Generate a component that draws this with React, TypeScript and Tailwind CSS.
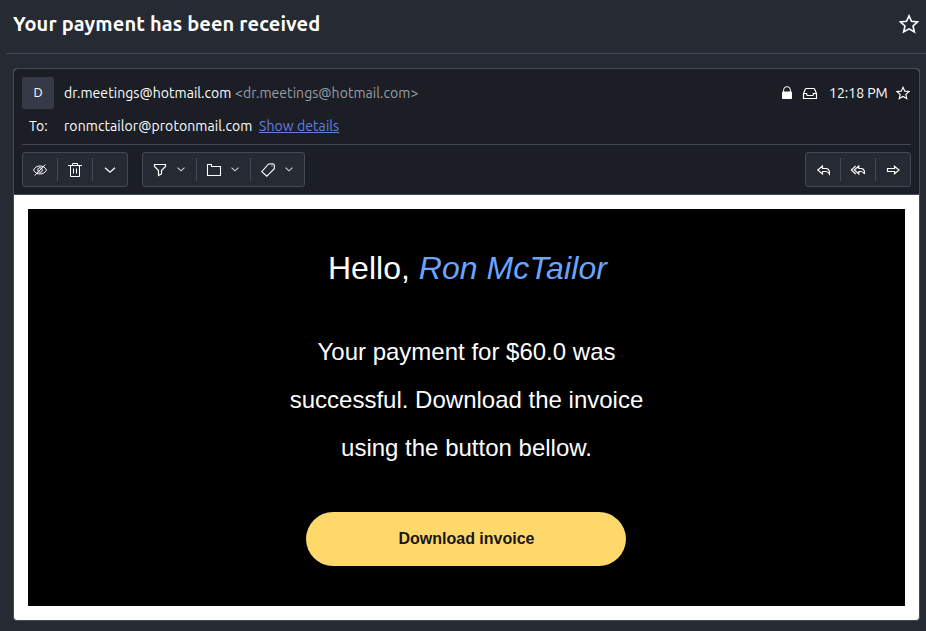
import type { ReactNode } from "react";

const ui = "font-['Ubuntu','Noto_Sans',sans-serif]";

function Icon({ children, className = "" }: { children: ReactNode; className?: string }) {
  return (
    <svg viewBox="0 0 16 16" width="16" height="16" fill="none" stroke="white" className={`shrink-0 ${className}`}>
      {children}
    </svg>
  );
}

function Star({ size, width }: { size: number; width: number }) {
  return (
    <svg viewBox="0 0 20 20" width={size} height={size} fill="none" stroke="white" strokeWidth={width} strokeLinejoin="miter" className="shrink-0">
      <path d="M10 1.8 12.5 7.3 18.6 7.9 14 12 15.4 18 10 14.9 4.6 18 6 12 1.4 7.9 7.5 7.3Z" />
    </svg>
  );
}

function SmallChevron() {
  return (
    <svg viewBox="0 0 8 5" width="8" height="5" fill="none" stroke="#d0d2d6" strokeWidth="1.1" className="shrink-0">
      <path d="M.5 .7 4 3.8 7.5 .7" />
    </svg>
  );
}

function Group({ children, className }: { children: ReactNode; className: string }) {
  return (
    <div className={`flex h-[35px] items-center rounded-[3px] border border-[#444957] bg-[#262a33] ${className}`}>
      {children}
    </div>
  );
}

function Divider() {
  return <div className="h-[23px] w-px shrink-0 bg-[#444957]" />;
}

function Cell({ children }: { children: ReactNode }) {
  return <button className="flex h-full w-[34px] items-center justify-center">{children}</button>;
}

function MenuCell({ children }: { children: ReactNode }) {
  return <button className="flex h-full w-[53px] items-center gap-[9px] pl-[9px]">{children}<SmallChevron /></button>;
}

export default function App() {
  return (
    <div className={`h-[631px] w-[926px] overflow-hidden bg-[#262a33] text-white ${ui}`}>
      <header className="ml-[6px] flex h-[54px] items-start justify-between border-b border-[#444957] pl-[7px] pr-[7px]">
        <h1 className="mt-[9px] whitespace-nowrap text-[20px] font-bold leading-[30px] tracking-[0.14px]">Your payment has been received</h1>
        <div className="mt-[14px]"><Star size={20} width={1.6} /></div>
      </header>

      <article className="ml-[13px] mt-[14px] flex h-[553px] w-[907px] flex-col overflow-hidden rounded-[4px] border border-[#444957] bg-white">
        <div className="h-[126px] border-b border-[#444957] bg-[#1b1e25] px-[8px] pt-[8px]">
          <div className="flex h-[32px] items-center">
            <div className="flex size-[32px] items-center justify-center rounded-[2px] bg-[#363a47] text-[13px]">D</div>
            <span className="ml-[10px] w-[171px] whitespace-nowrap text-[14px] tracking-[0.05px]">dr.meetings@hotmail.com</span>
            <span className="whitespace-nowrap text-[14px] tracking-[0.05px] text-[#9a9da5]">&lt;dr.meetings@hotmail.com&gt;</span>
            <div className="ml-auto flex items-center">
              <Icon className="mr-[7px]">
                <path d="M3.5 7h9v6.5h-9z" fill="white" />
                <path d="M4.6 7V5a3.4 3.4 0 0 1 6.8 0v2" />
              </Icon>
              <Icon className="mr-[11px]">
                <path d="M1.5 8.5 3.4 4.1q.3-.6.9-.6h7.4q.6 0 .9.6l1.9 4.4v5h-13zM1.5 8.5h3.2v1.2q0 .8.8.8h5q.8 0 .8-.8V8.5h3.2" strokeWidth="1.2" />
              </Icon>
              <time className="mr-[8px] w-[59px] whitespace-nowrap text-[14px]">12:18 PM</time>
              <Star size={14} width={1.6} />
              <div className="w-px" />
            </div>
          </div>
          <div className="flex h-[36px] items-center border-b border-[#444957] text-[14px]">
            <span className="ml-[7px] w-[35px]">To:</span>
            <span className="w-[195px] whitespace-nowrap tracking-[0.08px]">ronmctailor@protonmail.com</span>
            <a className="whitespace-nowrap tracking-[0.08px] text-[#657ee4] underline" href="#details">Show details</a>
          </div>

          <div className="flex pt-[7px]">
            <Group className="w-[106px]">
              <Cell>
                <Icon>
                  <path d="M1.5 8C3 5.2 5.2 4 8 4s5 1.2 6.5 4C13 10.800 10.800 12 8 12S3 10.800 1.500 8ZM13.300 2.500 2.700 13.500" />
                  <circle cx="8" cy="8" r="2.300" />
                </Icon>
              </Cell>
              <Divider />
              <Cell>
                <Icon>
                  <path d="M1 3.500h14M5.500 3.500v-2h5v2M3.500 3.500v11h9v-11M6.500 6.500v5M9.500 6.500v5" />
                </Icon>
              </Cell>
              <Divider />
              <Cell><Icon><path d="m3 5.700 5 4.500 5-4.500" strokeWidth="1.200" /></Icon></Cell>
            </Group>
            <Group className="ml-[14px] w-[163px]">
              <MenuCell><Icon><path d="M2.500 2.500h11v2l-4 4v3.500l-3 1.500v-5l-4-4z" strokeWidth="1.200" /></Icon></MenuCell>
              <Divider />
              <MenuCell><Icon><path d="M1.500 2.500h4v2h9v9h-13z" strokeWidth="1.100" /></Icon></MenuCell>
              <Divider />
              <MenuCell>
                <Icon>
                  <path d="M8.500 2 13 1.700l1.300 1.200v3.800l-7.500 7.500-5-4.500z" strokeWidth="1.100" />
                  <path d="M11.500 4h1" />
                </Icon>
              </MenuCell>
            </Group>
            <Group className="ml-auto w-[106px]">
              <Cell>
                <Icon><path d="M7.500 4 2.700 8l4.800 4V9.500h3.500q2 0 3.400 2.500V9.500q-.6-3-3.400-3H7.500z" strokeWidth="1.100" /></Icon>
              </Cell>
              <Divider />
              <Cell>
                <Icon><path d="M8.800 4 4.300 8l4.500 4V9.500h2.200q2.200 0 3.500 2.500V9.500q-.6-3-3.500-3H8.800zM5.700 4 1.300 8l4.400 4" strokeWidth="1.100" /></Icon>
              </Cell>
              <Divider />
              <Cell><Icon><path d="M2.500 6.500h7V4.200L14 8l-4.500 3.800V9.500h-7z" strokeWidth="1.200" /></Icon></Cell>
            </Group>
          </div>
        </div>

        <div className="flex-1 p-[14px]">
          <div className="flex h-[397px] flex-col items-center bg-black font-['Liberation_Sans',Arial,sans-serif]">
            <p className="mt-[35px] whitespace-nowrap pl-[2px] text-[32px] leading-[48px]">
              Hello, <em className="tracking-[0.08px] text-[#6ba5ff]">Ron McTailor</em>
            </p>
            <p className="mt-[36px] w-[380px] text-center text-[24px] leading-[48px]">
              Your payment for $60.0 was<br />successful. Download the invoice<br />using the button bellow.
            </p>
            <button className="mr-px mt-[40px] h-[54px] w-[320px] rounded-[27px] bg-[#ffd86b] pl-px text-[16px] font-bold text-[#171717]">Download invoice</button>
          </div>
        </div>
      </article>
    </div>
  );
}
